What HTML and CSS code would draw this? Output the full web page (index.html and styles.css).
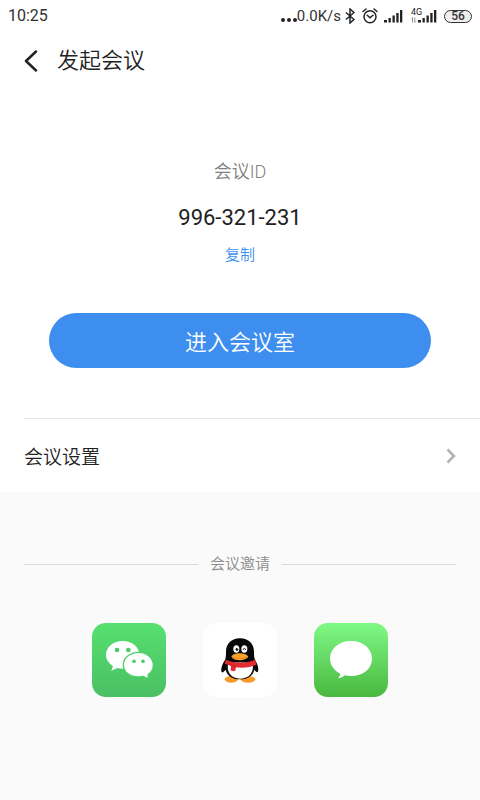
FILE: index.html
```html
<!DOCTYPE html>
<html lang="zh-CN">
<head>
<meta charset="utf-8">
<meta name="viewport" content="width=device-width, initial-scale=1">
<title>发起会议</title>
<link rel="stylesheet" href="styles.css">
</head>
<body>
<div class="status">
  <span class="time">10:25</span>
  <div class="indicators">
    <svg class="dots" width="17" height="16" viewBox="0 0 17 16" aria-hidden="true"><g fill="#222"><circle cx="3" cy="12" r="2"/><circle cx="9" cy="12" r="2"/><circle cx="15" cy="12" r="2"/></g></svg>
    <span class="speed">0.0K/s</span>
    <svg class="bluetooth" width="10" height="16" viewBox="0 0 10 16" aria-hidden="true"><path d="M1 4.500 9 11.500 5 15V1L9 4.500 1 11.500" fill="none" stroke="#222" stroke-width="1.500"/></svg>
    <svg class="alarm" width="16" height="16" viewBox="0 0 16 16" aria-hidden="true"><g fill="none" stroke="#222" stroke-width="1.500" stroke-linecap="round"><circle cx="8" cy="8.700" r="6"/><path d="M1 3.500 4 1M12 1 15 3.500M5.200 7.300 8 9.800 11 7.200"/></g></svg>
    <svg class="signal" width="19" height="16" viewBox="0 0 19 16" aria-hidden="true"><path fill="#222" d="M0 12h3v2.500H0zM4.500 10h2.300v4.500H4.500zM8.500 7.500h2.300v7H8.500zM12.300 5h2.300v9.500h-2.300zM16 2h2.300v12.500H16z"/></svg>
    <svg class="signal-4g" width="26" height="16" viewBox="0 0 26 16" aria-hidden="true"><text x="0" y="7" font-size="9" fill="#222">4G</text><path fill="#222" d="M7 12h3v2.500H7zM11.500 10h2.300v4.500h-2.300zM15.500 7.500h2.300v7h-2.300zM19.300 5h2.300v9.500h-2.300zM23 2h2.300v12.500H23z"/><path d="M1.500 14.500v-5M3.800 9.500v5M.5 11l1-1M4.800 13.500l-1 1" stroke="#777" stroke-width=".8" fill="none"/></svg>
    <span class="battery">56</span>
  </div>
</div>
<header class="header">
  <button class="back" type="button" aria-label="返回"><svg width="14" height="22" viewBox="0 0 14 22"><path d="M12 1.500 2 11l10 9.500" fill="none" stroke="#222" stroke-width="2.500" stroke-linecap="round" stroke-linejoin="round"/></svg></button>
  <h1 class="title">发起会议</h1>
</header>
<main class="main">
  <section class="meeting">
    <p class="label">会议ID</p>
    <p class="number">996-321-231</p>
    <button class="copy" type="button">复制</button>
    <button class="enter" type="button">进入会议室</button>
  </section>
  <a class="settings" href="#settings">
    <span>会议设置</span>
    <svg width="10" height="16" viewBox="0 0 10 16" aria-hidden="true"><path d="M1.500 1.500 8 8l-6.500 6.500" fill="none" stroke="#b2b2b2" stroke-width="2.500"/></svg>
  </a>
  <section class="invite">
    <h2 class="invite-title">会议邀请</h2>
    <div class="apps">
      <button class="app" type="button" aria-label="微信">
        <svg viewBox="25 25 222 222">
          <defs><linearGradient id="wechat" x1="0" y1="0" x2="0" y2="1"><stop offset="0" stop-color="#57e070"/><stop offset="1" stop-color="#4abf64"/></linearGradient></defs>
          <rect x="25" y="25" width="222" height="222" rx="42" fill="url(#wechat)"/>
          <path fill="#fff" d="M117 79c28 0 50 18 50 42s-22 41-50 41c-6 0-11-1-16-2l-18 8 5-14c-13-8-21-19-21-33 0-24 22-42 50-42z"/>
          <path fill="#fff" stroke="#4fd069" stroke-width="4" d="M164 113c25 0 45 16 45 38 0 12-6 22-15 28l-1 13-15-7c-5 1-9 2-14 2-25 0-45-15-45-36s20-38 45-38z"/>
          <g fill="#4dca67"><circle cx="100" cy="106" r="7"/><circle cx="134" cy="106" r="7"/><circle cx="151" cy="140" r="5.500"/><circle cx="178" cy="140" r="5.500"/></g>
        </svg>
      </button>
      <button class="app" type="button" aria-label="QQ">
        <svg viewBox="24 24 222 222">
          <rect x="24" y="24" width="222" height="222" rx="42" fill="#fff"/>
          <g fill="#f89b29"><ellipse cx="109" cy="193" rx="20" ry="10"/><ellipse cx="159" cy="193" rx="22" ry="10"/></g>
          <path fill="#080808" d="M135 70c-26 0-42 17-42 40 0 9 0 17-3 25-7 10-13 25-11 34 2 7 8 1 13-5 4 17 18 29 43 29s39-12 43-29c5 6 9 11 11 5 3-9-2-24-9-34-3-8-3-16-3-25 0-23-16-40-42-40z"/>
          <path fill="#fff" d="M99 148c1-7 72-7 74 0 4 21-7 43-37 43s-41-22-37-43z"/>
          <path fill="#e32c2f" d="M92 134c27 12 61 12 89 0l3 15c-15 8-40 11-62 8l-1 10c-5 2-10 2-14-1l1-13-18-7z"/>
          <path fill="none" stroke="#bd1d25" stroke-width="2" d="M98 143c5 5 13 8 23 10v8"/>
          <g fill="#fff"><ellipse cx="124" cy="102" rx="9" ry="11"/><ellipse cx="148" cy="102" rx="9" ry="11"/></g>
          <ellipse cx="126" cy="103" rx="4" ry="5" fill="#080808"/><circle cx="128" cy="101" r="1.500" fill="#fff"/>
          <path d="M143 104q5-7 10 0" fill="none" stroke="#080808" stroke-width="3"/>
          <path fill="#f9a12a" d="M109 125c5-14 44-14 51 0-7 12-42 16-51 0z"/>
          <path fill="none" stroke="#d97a18" stroke-width="2" d="M112 126c13 7 32 7 45 0"/>
        </svg>
      </button>
      <button class="app" type="button" aria-label="短信">
        <svg viewBox="26 25 222 222">
          <defs><linearGradient id="messages" x1="0" y1="0" x2="0" y2="1"><stop offset="0" stop-color="#7ff986"/><stop offset="1" stop-color="#49b83f"/></linearGradient></defs>
          <rect x="26" y="25" width="222" height="222" rx="42" fill="url(#messages)"/>
          <path fill="#fff" d="M137 79c36 0 63 23 63 53s-27 52-63 52c-7 0-13-1-19-2-6 5-12 8-20 9 4-4 6-9 7-14-18-9-31-26-31-45 0-30 28-53 63-53z"/>
        </svg>
      </button>
    </div>
  </section>
</main>
</body>
</html>
```

FILE: styles.css
```css
* { box-sizing: border-box; }

body {
  margin: 0;
  min-height: 100vh;
  display: flex;
  flex-direction: column;
  background: #fff;
  color: #222;
  font-family: Roboto, "Noto Sans CJK SC", sans-serif;
  font-weight: 350;
}

h1, h2, p { margin: 0; font-weight: inherit; }

button {
  margin: 0;
  padding: 0;
  border: 0;
  background: none;
  color: inherit;
  font: inherit;
  cursor: pointer;
}

svg { display: block; }

.status {
  display: flex;
  align-items: center;
  justify-content: space-between;
  height: 32px;
  padding: 0 8px;
  color: #333;
  font-size: 16px;
  font-weight: 400;
  line-height: 20px;
}

.indicators { display: flex; align-items: center; }
.speed { font-size: 15px; }
.bluetooth { margin-left: 4px; }
.alarm { margin-left: 7px; }
.signal { margin-left: 6px; }
.signal-4g { margin-left: 8px; }

.battery {
  width: 28px;
  height: 13px;
  margin-left: 7px;
  border: 1px solid #333;
  border-radius: 7px;
  background: #eee;
  font-size: 12px;
  font-weight: 500;
  line-height: 11px;
  text-align: center;
}

.header {
  display: flex;
  align-items: center;
  gap: 19px;
  height: 58px;
  padding: 0 24px;
}

.title { font-size: 22px; line-height: 32px; }

.main { flex: 1; display: flex; flex-direction: column; }

.meeting {
  display: flex;
  flex-direction: column;
  align-items: center;
  padding: 69px 49px 50px;
}

.label { color: #808080; font-size: 18px; line-height: 26px; }
.number { margin-top: 18px; font-size: 22px; font-weight: 400; line-height: 30px; }
.copy { margin-top: 10px; color: #3d8ef0; font-size: 15px; line-height: 24px; }

.enter {
  width: 100%;
  height: 55px;
  margin-top: 46px;
  padding-bottom: 2px;
  border-radius: 28px;
  background: #3e8ef0;
  color: #fff;
  font-size: 22px;
}

.settings {
  display: flex;
  align-items: center;
  justify-content: space-between;
  height: 74px;
  margin-left: 24px;
  padding-right: 24px;
  border-top: 1px solid #e6e6e6;
  color: inherit;
  font-size: 19px;
  text-decoration: none;
}

.invite { flex: 1; padding: 60px 24px 24px; background: #fafafa; }

.invite-title {
  display: flex;
  align-items: center;
  gap: 12px;
  color: #8c8c8c;
  font-size: 15px;
  line-height: 24px;
}

.invite-title::before,
.invite-title::after {
  content: "";
  flex: 1;
  height: 1px;
  background: #d9d9d9;
}

.apps {
  display: flex;
  justify-content: center;
  gap: 37px;
  margin-top: 47px;
}

.app { width: 74px; height: 74px; }
```
